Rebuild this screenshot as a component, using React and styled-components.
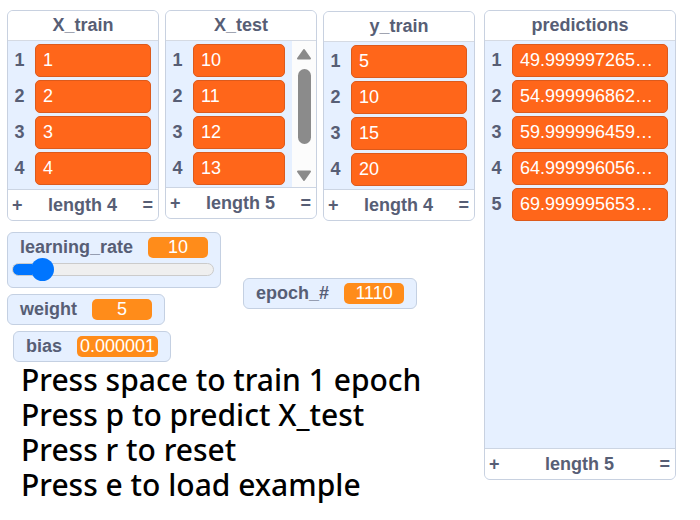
import React, { useState } from "react";
import styled, { createGlobalStyle } from "styled-components";

const Global = createGlobalStyle`
  * { box-sizing: border-box; }
  body { margin: 0; background: #fff; }
`;

const Stage = styled.main`
  display: grid;
  grid-template-columns: minmax(0, 468fr) minmax(0, 192fr);
  gap: 9px;
  padding: 10px 24px 12px 7px;
  font: 18px/21px "Liberation Sans", Arial, sans-serif;
  color: #575e75;
`;

const Workspace = styled.div`
  display: flex;
  flex-direction: column;
`;

const ListRow = styled.div`
  display: grid;
  grid-template-columns: repeat(3, minmax(0, 1fr));
  align-items: start;
  gap: 6px;
`;

const Panel = styled.section`
  display: flex;
  flex-direction: column;
  align-self: ${(p) => p.$align || "start"};
  min-height: ${(p) => p.$height}px;
  border: 1px solid #c8d1e0;
  border-radius: 6px;
  background: #e6f0ff;
  overflow: hidden;
`;

const PanelTitle = styled.h2`
  margin: 0;
  padding: 4px 0;
  border-bottom: 1px solid #d5dae3;
  background: #fff;
  font-size: 18px;
  line-height: 21px;
  font-weight: 700;
  text-align: center;
`;

const PanelBody = styled.div`
  display: flex;
  flex: 1;
`;

const Items = styled.ol`
  display: flex;
  flex: 1;
  flex-direction: column;
  gap: 3px;
  min-width: 0;
  margin: 0;
  padding: 3px 7px 2px 0;
  list-style: none;
`;

const Item = styled.li`
  display: flex;
  align-items: center;
`;

const Index = styled.span`
  flex: 0 0 27px;
  padding-right: 4px;
  font-weight: 700;
  text-align: center;
`;

const Cell = styled.span`
  flex: 1;
  min-width: 0;
  height: 33px;
  padding: 0 7px;
  border: 1px solid #dc5a1c;
  border-radius: 5px;
  background: #ff661a;
  color: #fff;
  line-height: 30px;
  white-space: nowrap;
  overflow: hidden;
`;

const PanelFooter = styled.footer`
  display: flex;
  align-items: center;
  justify-content: space-between;
  height: 31px;
  padding: 0 5px 0 4px;
  border-top: 1px solid #ccd5e3;
  background: #fff;
  font-weight: 700;
`;

const FooterButton = styled.button`
  padding: 0;
  border: 0;
  background: none;
  color: inherit;
  font: inherit;
  line-height: 21px;
  cursor: pointer;
`;

const Scrollbar = styled.div`
  display: flex;
  flex: 0 0 24px;
  flex-direction: column;
  align-items: center;
  padding: 7px 0 5px;
  background: #fcfcfc;
`;

const Thumb = styled.div`
  width: 13px;
  height: 75px;
  margin: 9px 0 auto;
  border-radius: 7px;
  background: #8b8b8b;
`;

const Readouts = styled.div`
  display: flex;
  align-items: flex-start;
  gap: 22px;
  margin-top: 11px;
`;

const ReadoutStack = styled.div`
  display: flex;
  flex-direction: column;
  align-items: flex-start;
  gap: 6px;
`;

const SideReadout = styled.div`
  padding-top: 46px;
`;

const Monitor = styled.div`
  margin-left: ${(p) => p.$indent || 0}px;
  border: 1px solid #c4d0e2;
  border-radius: 6px;
  background: #e6f0ff;
`;

const MonitorLine = styled.div`
  display: flex;
  align-items: center;
  gap: 15px;
  padding: 4px 12px;
`;

const Label = styled.label`
  font-weight: 700;
`;

const Value = styled.output`
  min-width: 60px;
  padding: 0 3px;
  border-radius: 5px;
  background: #ff8c1a;
  color: #fff;
  text-align: center;
`;

const Slider = styled.input`
  display: block;
  width: calc(100% - 10px);
  height: 23px;
  margin: -4px 6px 6px 4px;
  appearance: none;
  background: none;

  &::-webkit-slider-runnable-track {
    height: 13px;
    border: 1px solid #cbcbcb;
    border-radius: 7px;
    background: linear-gradient(#0075ff, #0075ff) 0 0 / ${(p) => p.value}% 100% no-repeat border-box #efefef;
  }

  &::-webkit-slider-thumb {
    appearance: none;
    width: 23px;
    height: 23px;
    margin-top: -6px;
    border-radius: 50%;
    background: #0075ff;
  }
`;

const Instructions = styled.div`
  padding: 0 0 0 14px;
  color: #000;
  font-family: "Noto Sans", sans-serif;
  font-size: 30px;
  font-weight: 500;
  line-height: 35px;
`;

const Instruction = styled.p`
  margin: 0;
`;

function Arrow({ down }) {
  return (
    <svg width="16" height="12" viewBox="0 0 16 12" aria-hidden="true">
      <path
        d={down ? "M2 1.5H14L8 10Z" : "M2 10.5H14L8 2Z"}
        fill="#8b8b8b"
        stroke="#8b8b8b"
        strokeWidth="2"
        strokeLinejoin="round"
      />
    </svg>
  );
}

function ListMonitor({ name, values, length, height, align, scroll }) {
  return (
    <Panel $height={height} $align={align}>
      <PanelTitle>{name}</PanelTitle>
      <PanelBody>
        <Items>
          {values.map((v, i) => (
            <Item key={v}>
              <Index>{i + 1}</Index>
              <Cell>{v}</Cell>
            </Item>
          ))}
        </Items>
        {scroll && (
          <Scrollbar>
            <Arrow />
            <Thumb />
            <Arrow down />
          </Scrollbar>
        )}
      </PanelBody>
      <PanelFooter>
        <FooterButton type="button" aria-label={`Add to ${name}`}>+</FooterButton>
        <span>length {length}</span>
        <FooterButton type="button" aria-label={`Resize ${name}`}>=</FooterButton>
      </PanelFooter>
    </Panel>
  );
}

function VariableMonitor({ id, name, value, indent, children }) {
  return (
    <Monitor $indent={indent}>
      <MonitorLine>
        <Label htmlFor={id}>{name}</Label>
        <Value id={children ? undefined : id}>{value}</Value>
      </MonitorLine>
      {children}
    </Monitor>
  );
}

export default function App() {
  const [rate, setRate] = useState(10);
  return (
    <>
      <Global />
      <Stage>
        <Workspace>
          <ListRow>
            <ListMonitor name="X_train" values={["1", "2", "3", "4"]} length={4} height={211} />
            <ListMonitor name="X_test" values={["10", "11", "12", "13"]} length={5} height={209} scroll />
            <ListMonitor name="y_train" values={["5", "10", "15", "20"]} length={4} height={210} align="end" />
          </ListRow>
          <Readouts>
            <ReadoutStack>
              <VariableMonitor id="rate" name="learning_rate" value={rate}>
                <Slider
                  id="rate"
                  type="range"
                  min="0"
                  max="100"
                  value={rate}
                  onChange={(e) => setRate(Number(e.target.value))}
                />
              </VariableMonitor>
              <VariableMonitor id="weight" name="weight" value="5" />
              <VariableMonitor id="bias" name="bias" value="0.000001" indent={6} />
            </ReadoutStack>
            <SideReadout>
              <VariableMonitor id="epoch" name="epoch_#" value="1110" />
            </SideReadout>
          </Readouts>
          <Instructions>
            <Instruction>Press space to train 1 epoch</Instruction>
            <Instruction>Press p to predict X_test</Instruction>
            <Instruction>Press r to reset</Instruction>
            <Instruction>Press e to load example</Instruction>
          </Instructions>
        </Workspace>
        <ListMonitor
          name="predictions"
          values={["49.999997265…", "54.999996862…", "59.999996459…", "64.999996056…", "69.999995653…"]}
          length={5}
          height={470}
        />
      </Stage>
    </>
  );
}
